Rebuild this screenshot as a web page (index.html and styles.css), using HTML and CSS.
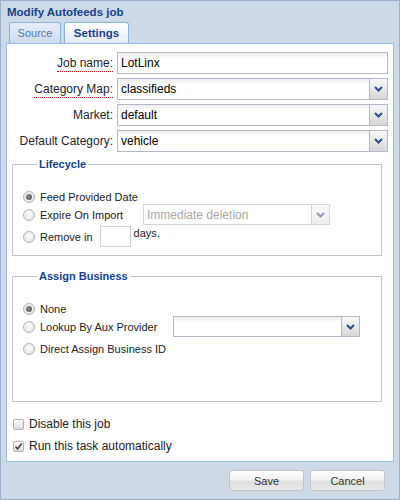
FILE: index.html
```html
<!DOCTYPE html>
<html>
<head>
<meta charset="utf-8">
<link rel="stylesheet" href="styles.css">
</head>
<body>
<div class="window">
  <div class="title">Modify Autofeeds job</div>
  <div class="tabs">
    <div class="tab">Source</div>
    <div class="tab active">Settings</div>
  </div>
  <div class="panel">
    <div class="form-row">
      <label class="lbl"><span class="tip">Job name:</span></label>
      <div class="field"><span class="val">LotLinx</span></div>
    </div>
    <div class="form-row">
      <label class="lbl"><span class="tip">Category Map:</span></label>
      <div class="field combo"><span class="val">classifieds</span><span class="trigger"><svg width="9" height="6" viewBox="0 0 9 6"><path d="M1 1 L4.5 4.5 L8 1" fill="none" stroke="#2c4d8c" stroke-width="2"/></svg></span></div>
    </div>
    <div class="form-row">
      <label class="lbl">Market:</label>
      <div class="field combo"><span class="val">default</span><span class="trigger"><svg width="9" height="6" viewBox="0 0 9 6"><path d="M1 1 L4.5 4.5 L8 1" fill="none" stroke="#2c4d8c" stroke-width="2"/></svg></span></div>
    </div>
    <div class="form-row">
      <label class="lbl">Default Category:</label>
      <div class="field combo"><span class="val">vehicle</span><span class="trigger"><svg width="9" height="6" viewBox="0 0 9 6"><path d="M1 1 L4.5 4.5 L8 1" fill="none" stroke="#2c4d8c" stroke-width="2"/></svg></span></div>
    </div>

    <fieldset class="group lifecycle">
      <legend>Lifecycle</legend>
      <div class="radio-row first"><span class="radio on"></span><span class="rlabel">Feed Provided Date</span></div>
      <div class="radio-row"><span class="radio"></span><span class="rlabel w103">Expire On Import</span>
        <div class="field combo small disabled"><span class="val">Immediate deletion</span><span class="trigger"><svg width="9" height="6" viewBox="0 0 9 6"><path d="M1 1 L4.5 4.5 L8 1" fill="none" stroke="#8a9ab8" stroke-width="2"/></svg></span></div>
      </div>
      <div class="radio-row third"><span class="radio"></span><span class="rlabel">Remove in</span><div class="field days"></div><span class="days-lbl">days.</span></div>
    </fieldset>

    <fieldset class="group assign">
      <legend>Assign Business</legend>
      <div class="radio-row first"><span class="radio on"></span><span class="rlabel">None</span></div>
      <div class="radio-row"><span class="radio"></span><span class="rlabel w133">Lookup By Aux Provider</span>
        <div class="field combo small"><span class="val"></span><span class="trigger"><svg width="9" height="6" viewBox="0 0 9 6"><path d="M1 1 L4.5 4.5 L8 1" fill="none" stroke="#2c4d8c" stroke-width="2"/></svg></span></div>
      </div>
      <div class="radio-row third"><span class="radio"></span><span class="rlabel">Direct Assign Business ID</span></div>
    </fieldset>

    <div class="check-row first"><span class="checkbox"></span><span>Disable this job</span></div>
    <div class="check-row"><span class="checkbox"><svg width="9" height="9" viewBox="0 0 9 9"><path d="M1.5 4.5 L3.6 7 L7.6 1.5" fill="none" stroke="#444" stroke-width="1.6"/></svg></span><span>Run this task automatically</span></div>
  </div>
  <div class="footer">
    <button class="btn">Save</button>
    <button class="btn">Cancel</button>
  </div>
</div>
</body>
</html>
```

FILE: styles.css
```css
* { box-sizing: border-box; }
html, body { margin: 0; padding: 0; }
body {
  width: 400px;
  height: 500px;
  font-family: "Liberation Sans", Arial, sans-serif;
  color: #222;
}
.window {
  width: 400px;
  height: 500px;
  border: 1px solid #99b0cf;
  background: #ced9e7;
  padding: 0 5px;
  display: flex;
  flex-direction: column;
}
.title {
  height: 21px;
  line-height: 22px;
  padding-left: 1px;
  font-size: 11.5px;
  font-weight: bold;
  color: #15428b;
}
.tabs {
  height: 21px;
  display: flex;
  align-items: flex-end;
  padding-left: 3px;
  gap: 3px;
}
.tab {
  height: 21px;
  border: 1px solid #8db2e3;
  border-bottom: none;
  border-radius: 3px 3px 0 0;
  background: linear-gradient(#e6edf6, #cfdbeb);
  color: #5479a8;
  font-size: 11px;
  line-height: 20px;
  text-align: center;
  width: 52px;
}
.tab.active {
  width: 65px;
  background: linear-gradient(#ffffff, #e3ecf8);
  color: #15428b;
  font-weight: bold;
  font-size: 11.5px;
}
.panel {
  flex: 1;
  background: #fff;
  border: 1px solid #99bbe8;
  padding: 8px 5px 0 0;
  display: flex;
  flex-direction: column;
}
.form-row {
  display: flex;
  align-items: center;
  height: 22px;
  margin-bottom: 4px;
}
.lbl {
  width: 106px;
  text-align: right;
  font-size: 12px;
  color: #1e1e2e;
  margin-right: 4px;
}
.tip {
  border-bottom: 1px dotted #c41a1a;
  padding-bottom: 1px;
}
.field {
  height: 22px;
  border: 1px solid #b5b8c8;
  background: linear-gradient(#eeeeee, #ffffff 6px, #ffffff);
  font-size: 12px;
  color: #000;
  display: flex;
  align-items: center;
}
.form-row .field { flex: 1; }
.val {
  flex: 1;
  padding-left: 3px;
  white-space: nowrap;
  overflow: hidden;
}
.trigger {
  width: 18px;
  height: 100%;
  border-left: 1px solid #b5b8c8;
  background: linear-gradient(#f8f8f8, #e8e8e8 50%, #d6d6d6);
  display: flex;
  align-items: center;
  justify-content: center;
}
.trigger svg { display: block; }

.group {
  margin: 0 6px 0 5px;
  border: 1px solid #c2c4d2;
  padding: 0 10px;
  min-width: 0;
}
.group legend {
  font-size: 11px;
  font-weight: bold;
  color: #15428b;
  line-height: 14px;
  padding: 0 2px;
  margin-left: 14px;
}
.lifecycle {
  margin-top: 1px;
  padding-top: 19px;
  padding-bottom: 8px;
}
.assign {
  margin-top: 13px;
  padding-top: 19px;
  padding-bottom: 42px;
}
.radio-row {
  display: flex;
  align-items: center;
  height: 21px;
  font-size: 11px;
  color: #222;
}
.radio-row.first { height: 14px; }
.radio-row.third { margin-top: 1px; }
.radio {
  width: 12px;
  height: 12px;
  border-radius: 50%;
  border: 1px solid #b4b4b4;
  background: radial-gradient(circle at 50% 40%, #fdfdfd, #dcdcdc);
  margin-right: 5px;
  display: flex;
  align-items: center;
  justify-content: center;
  flex: none;
}
.radio.on::after {
  content: "";
  width: 6px;
  height: 6px;
  border-radius: 50%;
  background: radial-gradient(circle at 40% 40%, #8a8a8a, #555);
}
.rlabel { white-space: nowrap; }
.rlabel.w103 { width: 103px; }
.rlabel.w133 { width: 133px; }
.field.small {
  width: 187px;
  height: 21px;
}
.field.disabled {
  border-color: #d3d5de;
  color: #aaa;
  background: #fff;
}
.field.disabled .trigger {
  border-left-color: #d3d5de;
  background: linear-gradient(#fafafa, #eeeeee);
}
.field.days {
  width: 31px;
  height: 21px;
  margin-left: 7px;
  border-color: #cfd1dc;
  background: #fff;
}
.days-lbl {
  margin-left: 3px;
  align-self: flex-start;
  line-height: 14px;
}

.check-row {
  display: flex;
  align-items: center;
  height: 22px;
  font-size: 12px;
  color: #222;
  padding-left: 6px;
}
.check-row.first { margin-top: 11px; }
.checkbox {
  width: 11px;
  height: 11px;
  border: 1px solid #b0b0b0;
  border-radius: 2px;
  background: linear-gradient(#fafafa, #dedede);
  margin-right: 5px;
  display: flex;
  align-items: center;
  justify-content: center;
  flex: none;
}
.checkbox svg { display: block; }

.footer {
  height: 37px;
  display: flex;
  justify-content: flex-end;
  align-items: flex-start;
  padding-top: 8px;
  padding-right: 9px;
  gap: 6px;
}
.btn {
  width: 75px;
  height: 21px;
  border: 1px solid #c4c4c4;
  border-radius: 3px;
  background: linear-gradient(#ffffff, #f2f2f2 45%, #e0e0e0 55%, #e8e8e8);
  font-family: "Liberation Sans", Arial, sans-serif;
  font-size: 11px;
  color: #333;
  padding: 0;
}
```
